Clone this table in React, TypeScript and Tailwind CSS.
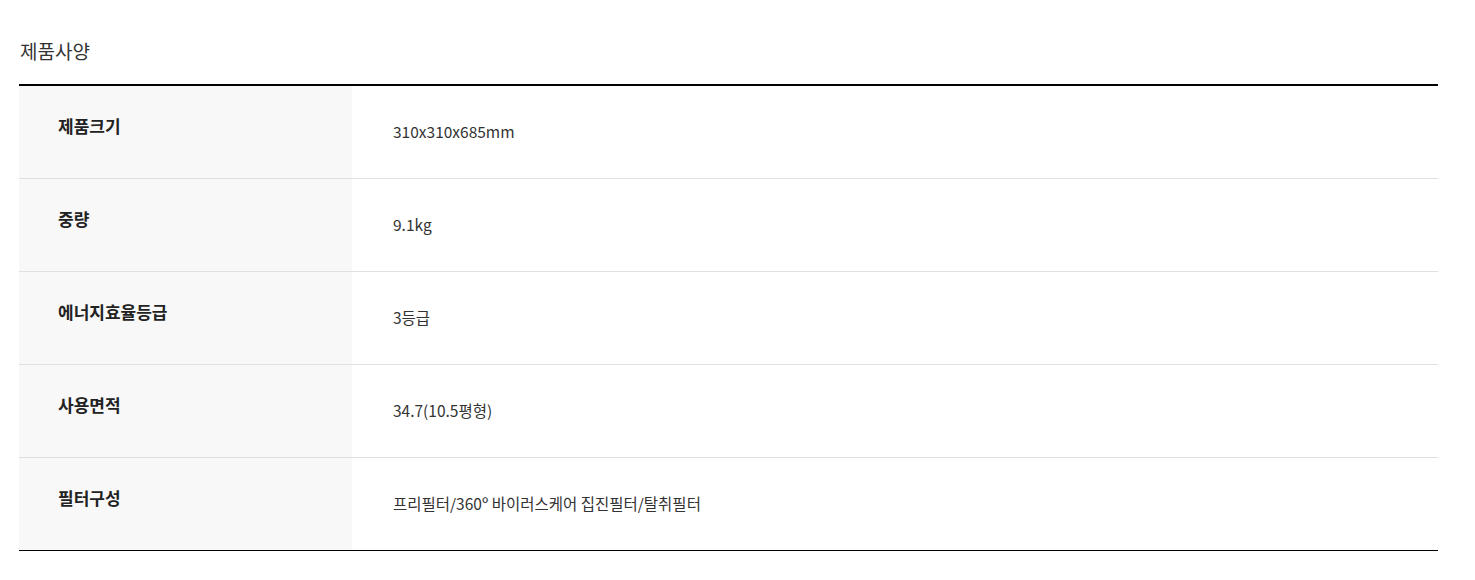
const specs = [
  { label: '제품크기', value: '310x310x685mm' },
  { label: '중량', value: '9.1kg' },
  { label: '에너지효율등급', value: '3등급' },
  { label: '사용면적', value: '34.7(10.5평형)' },
  { label: '필터구성', value: '프리필터/360º 바이러스케어 집진필터/탈취필터' },
]

export default function App() {
  return (
    <div
      className="min-h-screen bg-white pl-[19px] pr-[37px] text-[#222]"
      style={{ fontFamily: '"Noto Sans CJK KR", "Noto Sans", sans-serif' }}
    >
      <h2 className="pt-[38px] pl-px text-[19px] leading-[26px] font-normal text-[#333]">제품사양</h2>
      <div className="mt-[20px] border-t-2 border-black">
        {specs.map((s, i) => (
          <div
            key={s.label}
            className={`flex h-[93px] border-b ${i === specs.length - 1 ? 'border-black' : 'border-[#e0e0e0]'}`}
          >
            <div className="w-[333px] shrink-0 bg-[#f8f8f8] pl-[39px] pt-[28px] text-[17px] leading-6 font-bold text-[#222]">
              {s.label}
            </div>
            <div className="pl-[41px] pt-[33px] text-[15.5px] leading-6 text-[#333]">{s.value}</div>
          </div>
        ))}
      </div>
    </div>
  )
}
